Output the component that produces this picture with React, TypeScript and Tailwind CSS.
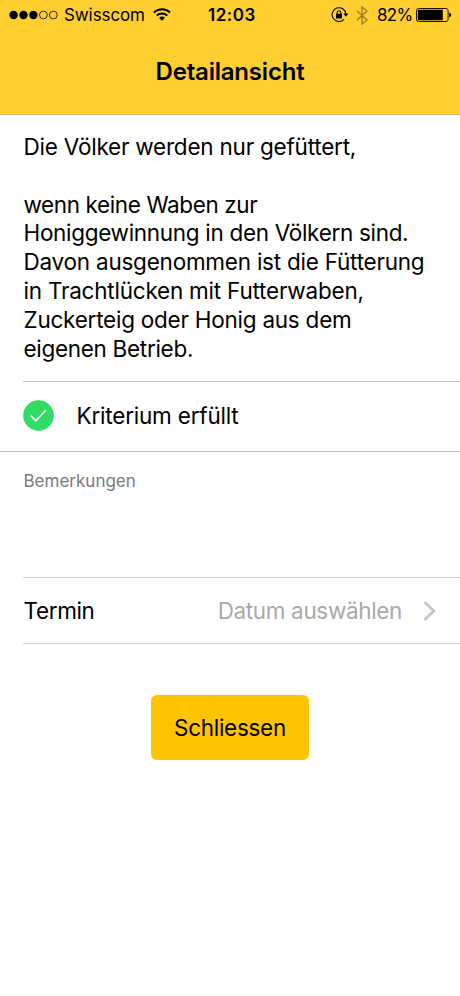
import React from "react";

const criterionLines = [
  { text: "Die Völker werden nur gefüttert,", tracking: "tracking-[-0.22px]" },
  { text: "", tracking: "" },
  { text: "wenn keine Waben zur", tracking: "tracking-[-0.39px]" },
  { text: "Honiggewinnung in den Völkern sind.", tracking: "tracking-[-0.31px]" },
  { text: "Davon ausgenommen ist die Fütterung", tracking: "tracking-[-0.23px]" },
  { text: "in Trachtlücken mit Futterwaben,", tracking: "tracking-[-0.22px]" },
  { text: "Zuckerteig oder Honig aus dem", tracking: "tracking-[-0.24px]" },
  { text: "eigenen Betrieb.", tracking: "tracking-[-0.3px]" },
];

function SignalDots() {
  return (
    <svg width="49" height="10" viewBox="0 0 49 10" className="mb-px shrink-0">
      {[4.6, 14.5, 24.4].map((x) => (
        <circle key={x} cx={x} cy="5" r="4.2" fill="#000" />
      ))}
      {[34.4, 44.3].map((x) => (
        <circle key={x} cx={x} cy="5" r="3.9" fill="none" stroke="#000" strokeWidth="0.8" />
      ))}
    </svg>
  );
}

function WifiIcon() {
  return (
    <svg width="18" height="13" viewBox="0 0 18 13" className="mb-0.5 shrink-0">
      <g fill="none" stroke="#000" strokeWidth="1.9">
        <path d="M0.9 4.5a11.6 11.6 0 0 1 16.2 0" />
        <path d="M3.7 7.6a7.6 7.6 0 0 1 10.6 0" />
      </g>
      <path d="M6.1 9.9a4.1 4.1 0 0 1 5.8 0L9 12.8z" fill="#000" />
    </svg>
  );
}

function RotationLockIcon() {
  return (
    <svg width="18" height="16" viewBox="0 0 18 16" className="mb-px shrink-0">
      <path d="M13 12.4A6.9 6.9 0 1 1 14.9 7" fill="none" stroke="#000" strokeWidth="1.1" />
      <path d="M12.4 6.6h5l-2.5 3.2z" fill="#000" />
      <rect x="5" y="6.8" width="6" height="4.7" rx="0.5" fill="#000" />
      <path d="M6.2 7V5.6a1.8 1.8 0 0 1 3.6 0V7" fill="none" stroke="#000" strokeWidth="1.1" />
    </svg>
  );
}

function BluetoothIcon() {
  return (
    <svg width="12" height="19" viewBox="0 0 12 19" className="shrink-0">
      <path
        d="M1 5l10 9-5 4V1l5 4-10 9"
        fill="none"
        stroke="#9d7f22"
        strokeWidth="1.4"
      />
    </svg>
  );
}

function BatteryIcon() {
  return (
    <svg width="36" height="14" viewBox="0 0 36 14" className="mb-px shrink-0">
      <rect x="0.5" y="0.5" width="31.6" height="13" rx="2" fill="none" stroke="#000" strokeWidth="0.9" />
      <rect x="1.8" y="1.8" width="25" height="10.4" rx="0.7" fill="#000" />
      <path d="M33.2 4.7c2.6.5 2.6 4.1 0 4.6z" fill="#000" />
    </svg>
  );
}

function StatusBar() {
  return (
    <div className="flex h-[31px] items-center pl-[9px] text-[17px] leading-[31px]">
      <SignalDots />
      <span className="ml-[6px] w-[81px] whitespace-nowrap tracking-[-0.1px]">Swisscom</span>
      <span className="ml-[8px]">
        <WifiIcon />
      </span>
      <span className="ml-[37px] w-[49px] whitespace-nowrap font-semibold tracking-[0.5px]">12:03</span>
      <span className="ml-[74px]">
        <RotationLockIcon />
      </span>
      <span className="ml-[7px]">
        <BluetoothIcon />
      </span>
      <span className="ml-[9px] w-[35px] whitespace-nowrap tracking-[-0.7px]">82%</span>
      <span className="ml-[4px]">
        <BatteryIcon />
      </span>
    </div>
  );
}

export default function App() {
  return (
    <div className="h-[996px] w-[460px] overflow-hidden bg-white font-['Inter',sans-serif] text-black">
      <header className="h-[115px] border-b border-[#cbb66b] bg-[#ffcf31]">
        <StatusBar />
        <h1 className="mt-[25px] text-center text-[24px] leading-8 font-semibold tracking-[-0.2px]">
          Detailansicht
        </h1>
      </header>

      <main>
        {/* Criterion */}
        <div className="ml-[23px] h-[267px] border-b border-[#c8c7cc] pt-[18px] pl-[0.5px] text-[22.5px] leading-[28.8px]">
          {criterionLines.map((line, i) => (
            <p key={i} className={`h-[28.8px] whitespace-nowrap ${line.tracking}`}>
              {line.text}
            </p>
          ))}
        </div>

        <div className="flex h-[70px] items-center border-b border-[#b5b5b5] pb-px pl-[23px]">
          <svg width="31" height="31" viewBox="0 0 31 31" className="mb-0.5 shrink-0">
            <circle cx="15.5" cy="15.5" r="15.3" fill="#30dc64" />
            <path d="M7.8 15.8l5 5L22.8 10.2" fill="none" stroke="#fff" strokeWidth="1.6" />
          </svg>
          <span className="ml-[22.5px] text-[22.5px] tracking-[-0.2px]">Kriterium erfüllt</span>
        </div>

        {/* Remarks */}
        <div className="ml-[23px] h-[126px] border-b border-[#d2d2d4] pt-[17px] pl-[0.5px] text-[17px] leading-6 text-[#7b7b7b]">
          Bemerkungen
        </div>

        {/* Due date */}
        <div className="ml-[23px] flex h-[66px] items-center border-b border-[#d2d2d4] pr-[24px] pl-[0.5px] text-[22.5px]">
          <span className="tracking-[-0.35px]">Termin</span>
          <span className="ml-auto tracking-[-0.35px] text-[#a9a9ab]">Datum auswählen</span>
          <svg width="13" height="20" viewBox="0 0 13 20" className="ml-[21px] shrink-0">
            <path d="M1.5 1l9.3 9-9.3 9" fill="none" stroke="#c4c4c6" strokeWidth="2.8" />
          </svg>
        </div>

        <button className="mx-auto mt-[51px] block h-[65px] w-[158px] rounded-[6px] bg-[#ffc400] text-[22.5px] tracking-[-0.3px]">
          Schliessen
        </button>
      </main>
    </div>
  );
}
